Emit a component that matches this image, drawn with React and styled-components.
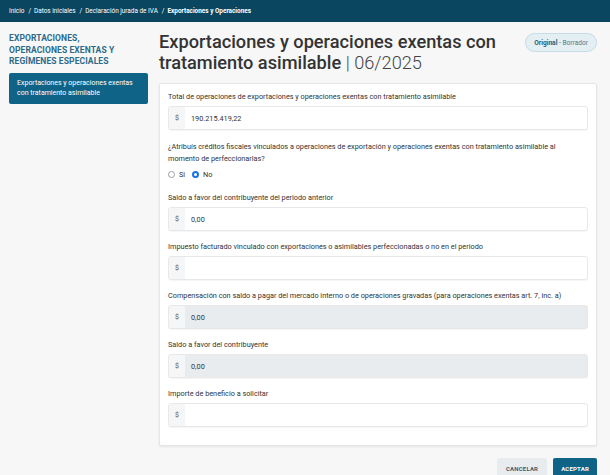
import React, { useState } from "react";
import styled, { createGlobalStyle } from "styled-components";

const GlobalStyle = createGlobalStyle`
  html, body {
    margin: 0;
    padding: 0;
    background: #f7f7f8;
    font-family: Roboto, "Liberation Sans", sans-serif;
    color: #333;
  }
  * { box-sizing: border-box; }
`;

const fields = [
  { label: "Saldo a favor del contribuyente del periodo anterior", value: "0,00" },
  { label: "Impuesto facturado vinculado con exportaciones o asimilables perfeccionadas o no en el periodo", value: "" },
  {
    label: "Compensación con saldo a pagar del mercado interno o de operaciones gravadas (para operaciones exentas art. 7, inc. a)",
    value: "0,00",
    disabled: true,
  },
  { label: "Saldo a favor del contribuyente", value: "0,00", disabled: true },
  { label: "Importe de beneficio a solicitar", value: "" },
];

function MoneyInput({ value, disabled }) {
  return (
    <InputGroup $disabled={disabled}>
      <Prefix>$</Prefix>
      <Value>{value}</Value>
    </InputGroup>
  );
}

function App() {
  const [answer, setAnswer] = useState("no");

  return (
    <>
      <GlobalStyle />
      <TopBar>
        <Crumb>Inicio</Crumb>
        <Sep>/</Sep>
        <Crumb>Datos iniciales</Crumb>
        <Sep>/</Sep>
        <Crumb>Declaración jurada de IVA</Crumb>
        <Sep>/</Sep>
        <Crumb $current>Exportaciones y Operaciones</Crumb>
      </TopBar>

      <Main>
        <Sidebar>
          <SideTitle>EXPORTACIONES, OPERACIONES EXENTAS Y REGÍMENES ESPECIALES</SideTitle>
          <SideItem>Exportaciones y operaciones exentas con tratamiento asimilable</SideItem>
        </Sidebar>

        <Content>
          <Header>
            <Title>
              Exportaciones y operaciones exentas con tratamiento asimilable <Period>| 06/2025</Period>
            </Title>
            <Badge>
              <b>Original</b> - Borrador
            </Badge>
          </Header>

          <Card>
            <Field>
              <Label>Total de operaciones de exportaciones y operaciones exentas con tratamiento asimilable</Label>
              <MoneyInput value="190.215.419,22" />
            </Field>

            <Question>
              <QuestionText>
                ¿Atribuís créditos fiscales vinculados a operaciones de exportación y operaciones exentas con
                tratamiento asimilable al momento de perfeccionarlas?
              </QuestionText>
              <Radios>
                <RadioLabel onClick={() => setAnswer("si")}>
                  <Radio $checked={answer === "si"} />
                  Si
                </RadioLabel>
                <RadioLabel onClick={() => setAnswer("no")}>
                  <Radio $checked={answer === "no"} />
                  No
                </RadioLabel>
              </Radios>
            </Question>

            {fields.map((f) => (
              <Field key={f.label}>
                <Label>{f.label}</Label>
                <MoneyInput value={f.value} disabled={f.disabled} />
              </Field>
            ))}
          </Card>

          <Actions>
            <Button>CANCELAR</Button>
            <Button $primary>ACEPTAR</Button>
          </Actions>
        </Content>
      </Main>
    </>
  );
}

export default App;

const TopBar = styled.div`
  height: 22px;
  background: #0b4660;
  display: flex;
  align-items: center;
  padding: 0 9px;
  font-size: 6.4px;
  color: #fff;
`;

const Crumb = styled.span`
  font-weight: ${(p) => (p.$current ? 700 : 400)};
`;

const Sep = styled.span`
  margin: 0 3px 0 4px;
`;

const Main = styled.div`
  display: flex;
  padding: 0 13px 0 9px;
`;

const Sidebar = styled.div`
  width: 139px;
  flex-shrink: 0;
  padding-top: 11px;
`;

const SideTitle = styled.div`
  font-size: 8.5px;
  font-weight: 700;
  line-height: 11.5px;
  color: #2c6b8a;
  letter-spacing: 0.1px;
  padding-right: 10px;
`;

const SideItem = styled.div`
  margin-top: 5px;
  background: #0e6387;
  color: #fff;
  border-radius: 2px;
  font-size: 7px;
  line-height: 10px;
  padding: 5px 8px 6px 8px;
`;

const Content = styled.div`
  flex: 1;
  margin-left: 11px;
`;

const Header = styled.div`
  display: flex;
  justify-content: space-between;
  align-items: flex-start;
  padding-top: 9px;
  height: 61px;
`;

const Title = styled.h1`
  margin: 0;
  font-size: 18.2px;
  line-height: 21px;
  font-weight: 500;
  color: #333;
  width: 350px;
`;

const Period = styled.span`
  font-weight: 300;
  color: #444;
`;

const Badge = styled.div`
  margin-top: 2px;
  height: 19px;
  padding: 0 8px;
  display: flex;
  align-items: center;
  border-radius: 10px;
  background: #e4eff4;
  border: 1px solid #c7dce6;
  font-size: 6.6px;
  color: #4a7a93;
  white-space: pre;

  b {
    color: #1d5f7e;
    font-weight: 700;
  }
`;

const Card = styled.div`
  background: #fff;
  border: 1px solid #e6e6e6;
  border-radius: 2px;
  box-shadow: 0 1px 2px rgba(0, 0, 0, 0.08);
  padding: 8px 8px 8px 8px;
`;

const Field = styled.div`
  margin-bottom: 11px;
  &:last-child {
    margin-bottom: 10px;
  }
`;

const Label = styled.div`
  font-size: 7.3px;
  line-height: 10px;
  margin-bottom: 4px;
  color: #333;
`;

const InputGroup = styled.div`
  display: flex;
  height: 24px;
  border: 1px solid #e8e8e8;
  border-radius: 3px;
  background: ${(p) => (p.$disabled ? "#e9ecef" : "#fff")};
  box-shadow: 0 1px 1px rgba(0, 0, 0, 0.04);
  overflow: hidden;
`;

const Prefix = styled.div`
  width: 16px;
  display: flex;
  align-items: center;
  justify-content: center;
  background: #f5f6f7;
  font-size: 7px;
  color: #555;
`;

const Value = styled.div`
  flex: 1;
  display: flex;
  align-items: center;
  padding-left: 6px;
  font-size: 7.3px;
  color: #333;
`;

const Question = styled.div`
  margin-bottom: 13px;
`;

const QuestionText = styled.div`
  font-size: 7.3px;
  line-height: 12px;
  padding-right: 20px;
`;

const Radios = styled.div`
  display: flex;
  gap: 7px;
  margin-top: 3px;
  height: 12px;
  align-items: center;
`;

const RadioLabel = styled.label`
  display: flex;
  align-items: center;
  gap: 4px;
  font-size: 7.3px;
  cursor: pointer;
`;

const Radio = styled.span`
  width: 7px;
  height: 7px;
  border-radius: 50%;
  border: ${(p) => (p.$checked ? "2px solid #1a73e8" : "1px solid #9aa0a6")};
  background: #fff;
`;

const Actions = styled.div`
  display: flex;
  justify-content: flex-end;
  gap: 6px;
  margin-top: 12px;
`;

const Button = styled.button`
  height: 20px;
  padding: 0 ${(p) => (p.$primary ? "8px" : "9px")};
  border: none;
  border-radius: 2px;
  font-family: Roboto, "Liberation Sans", sans-serif;
  font-size: 6px;
  font-weight: 700;
  letter-spacing: 0.2px;
  background: ${(p) => (p.$primary ? "#0e6387" : "#e8ecef")};
  color: ${(p) => (p.$primary ? "#fff" : "#4a5a66")};
  cursor: pointer;
`;
